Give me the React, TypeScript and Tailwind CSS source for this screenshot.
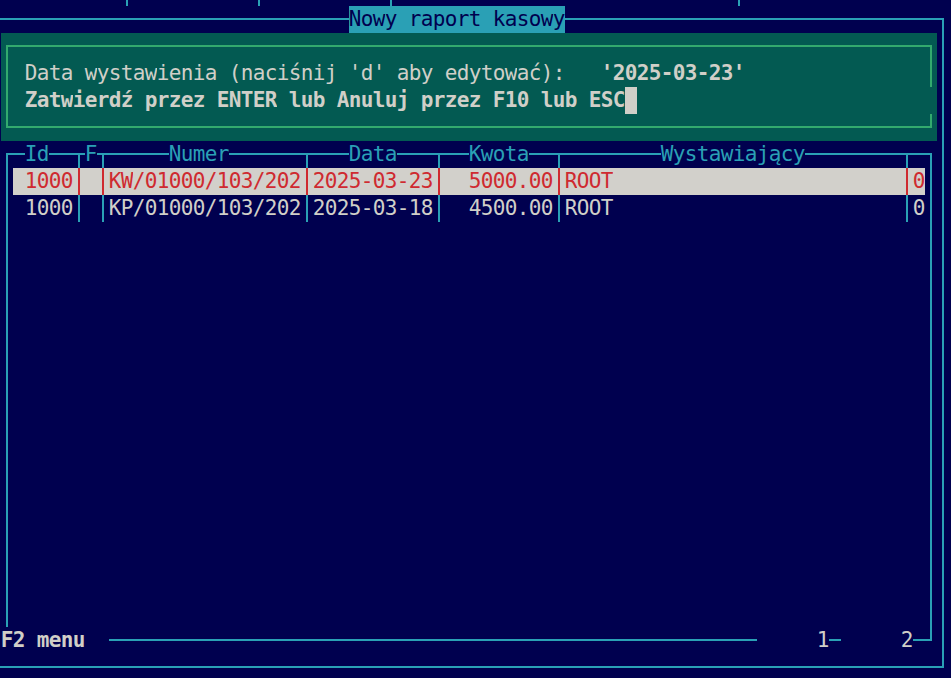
import React from "react";

type Attr = { fg: string; bg: string; bold?: boolean };
type Cell = Attr & { ch: string };

const BLANK: Attr = { fg: "text-[#2aa0b5]", bg: "" };
const LINE: Attr = { fg: "text-[#2aa0b5]", bg: "" };
const TITLE: Attr = { fg: "text-[#00004f]", bg: "bg-[#2aa0b5]" };
const DLG: Attr = { fg: "text-[#d0cfc8]", bg: "bg-[#035a52]" };
const DLG_BOLD: Attr = { fg: "text-[#d0cfc8]", bg: "bg-[#035a52]", bold: true };
const DLG_BOX: Attr = { fg: "text-[#33aa6e]", bg: "bg-[#035a52]" };
const CURSOR: Attr = { fg: "text-[#035a52]", bg: "bg-[#d0cfc8]" };
const SEL: Attr = { fg: "text-[#cf2a30]", bg: "bg-[#d2d0cb]" };
const NORM: Attr = { fg: "text-[#d0cfc8]", bg: "" };
const BOLD: Attr = { fg: "text-[#d0cfc8]", bg: "", bold: true };

// which arms of a box-drawing glyph are drawn: l(eft) r(ight) u(p) d(own)
const ARMS: Record<string, string> = {
  "─": "lr",
  "│": "ud",
  "┌": "rd",
  "┐": "ld",
  "└": "ru",
  "┘": "lu",
  "┬": "lrd",
};

// grid covers columns -1..79 and rows -1..24 (the screenshot is a crop of a bigger terminal)
function buildScreen(): Cell[][] {
  const rows: Cell[][] = Array.from({ length: 26 }, () =>
    Array.from({ length: 81 }, () => ({ ch: " ", ...BLANK }))
  );
  const put = (r: number, c: number, text: string, a: Attr) => {
    [...text].forEach((ch, i) => {
      rows[r + 1][c + 1 + i] = { ch, ...a };
    });
  };
  const fill = (r: number, c0: number, c1: number, ch: string, a: Attr) =>
    put(r, c0, ch.repeat(c1 - c0 + 1), a);

  // bottom of the window above
  [10, 21, 32, 61].forEach((c) => put(-1, c, "│", LINE));

  // outer frame
  put(0, -1, "┌", LINE);
  fill(0, 0, 28, "─", LINE);
  put(0, 29, "Nowy raport kasowy", TITLE);
  fill(0, 47, 77, "─", LINE);
  put(0, 78, "┐", LINE);
  for (let r = 1; r <= 23; r++) {
    put(r, -1, "│", LINE);
    put(r, 78, "│", LINE);
  }
  put(24, -1, "└", LINE);
  fill(24, 0, 77, "─", LINE);
  put(24, 78, "┘", LINE);

  // dialog
  for (let r = 1; r <= 4; r++) fill(r, 0, 77, " ", DLG);
  put(1, 0, "┌", DLG_BOX);
  fill(1, 1, 76, "─", DLG_BOX);
  put(1, 77, "┐", DLG_BOX);
  put(2, 0, "│", DLG_BOX);
  put(2, 77, "│", DLG_BOX);
  put(3, 0, "│", DLG_BOX);
  put(4, 0, "└", DLG_BOX);
  fill(4, 1, 76, "─", DLG_BOX);
  put(4, 77, "┘", DLG_BOX);
  put(2, 2, "Data wystawienia (naciśnij 'd' aby edytować):", DLG);
  put(2, 50, "'2025-03-23'", DLG_BOLD);
  put(3, 2, "Zatwierdź przez ENTER lub Anuluj przez F10 lub ESC", DLG_BOLD);
  put(3, 52, " ", CURSOR);

  // table header
  const seps = [6, 8, 25, 36, 46, 75];
  put(5, 0, "┌", LINE);
  fill(5, 1, 76, "─", LINE);
  put(5, 77, "┐", LINE);
  seps.forEach((c) => put(5, c, "┬", LINE));
  put(5, 2, "Id", LINE);
  put(5, 7, "F", LINE);
  put(5, 14, "Numer", LINE);
  put(5, 29, "Data", LINE);
  put(5, 39, "Kwota", LINE);
  put(5, 55, "Wystawiający", LINE);

  // table rows
  const data = [
    { id: "1000", nr: "KW/01000/103/202", date: "2025-03-23", sum: "5000.00", who: "ROOT", x: "0", sel: true },
    { id: "1000", nr: "KP/01000/103/202", date: "2025-03-18", sum: "4500.00", who: "ROOT", x: "0", sel: false },
  ];
  data.forEach((d, i) => {
    const r = 6 + i;
    const a = d.sel ? SEL : NORM;
    if (d.sel) fill(r, 1, 76, " ", SEL);
    seps.forEach((c) => put(r, c, "│", d.sel ? SEL : LINE));
    put(r, 2, d.id, a);
    put(r, 9, d.nr, a);
    put(r, 26, d.date, a);
    put(r, 46 - d.sum.length, d.sum, a);
    put(r, 47, d.who, a);
    put(r, 76, d.x, a);
  });
  for (let r = 6; r <= 22; r++) {
    put(r, 0, "│", LINE);
    put(r, 77, "│", LINE);
  }

  // status line
  put(23, 0, "F2 menu", BOLD);
  fill(23, 9, 62, "─", LINE);
  put(23, 68, "1", NORM);
  put(23, 69, "─", LINE);
  put(23, 75, "2", NORM);
  put(23, 76, "─", LINE);
  put(23, 77, "┘", LINE);

  return rows;
}

function BoxGlyph({ arms }: { arms: string }) {
  return (
    <svg width="12" height="27" className="block" fill="currentColor">
      {arms.includes("l") && <rect x="0" y="12" width="7" height="2" />}
      {arms.includes("r") && <rect x="5" y="12" width="7" height="2" />}
      {arms.includes("u") && <rect x="5" y="0" width="2" height="14" />}
      {arms.includes("d") && <rect x="5" y="12" width="2" height="15" />}
    </svg>
  );
}

export default function App() {
  const screen = buildScreen();
  return (
    <div className="w-[951px] h-[678px] overflow-hidden bg-[#00004f] font-['DejaVu_Sans_Mono',monospace] text-[21px] leading-[27px]">
      <div className="flex flex-col -mt-[21px] -ml-[11px]">
        {screen.map((row, r) => (
          <div key={r} className="flex h-[27px]">
            {row.map((c, i) => (
              <span
                key={i}
                className={`flex h-[27px] w-[12px] shrink-0 items-center justify-center whitespace-pre ${c.fg} ${c.bg} ${
                  c.bold ? "font-bold" : "font-normal"
                }`}
              >
                {ARMS[c.ch] ? <BoxGlyph arms={ARMS[c.ch]} /> : c.ch}
              </span>
            ))}
          </div>
        ))}
      </div>
    </div>
  );
}
